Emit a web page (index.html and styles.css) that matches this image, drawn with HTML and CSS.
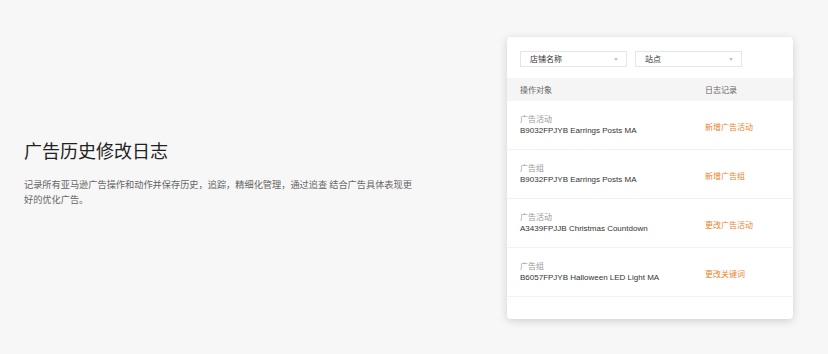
FILE: index.html
```html
<!DOCTYPE html>
<html lang="zh-CN">
<head>
    <meta charset="UTF-8">
    <meta name="viewport" content="width=device-width, initial-scale=1.0">
    <title>广告历史修改日志</title>
    <link rel="stylesheet" href="styles.css">
</head>
<body>
    <div class="section">
        <div class="intro">
            <h1>广告历史修改日志</h1>
            <p>记录所有亚马逊广告操作和动作并保存历史，追踪，精细化管理，通过追查 结合广告具体表现更好的优化广告。</p>
        </div>

        <div class="card">
            <div class="filters">
                <div class="select">店铺名称<span class="arrow"></span></div>
                <div class="select">站点<span class="arrow"></span></div>
            </div>

            <div class="table">
                <div class="row head">
                    <div class="col-obj">操作对象</div>
                    <div class="col-log">日志记录</div>
                </div>
                <div class="row">
                    <div class="col-obj">
                        <div class="type">广告活动</div>
                        <div class="name">B9032FPJYB Earrings Posts MA</div>
                    </div>
                    <div class="col-log"><a href="#">新增广告活动</a></div>
                </div>
                <div class="row">
                    <div class="col-obj">
                        <div class="type">广告组</div>
                        <div class="name">B9032FPJYB Earrings Posts MA</div>
                    </div>
                    <div class="col-log"><a href="#">新增广告组</a></div>
                </div>
                <div class="row">
                    <div class="col-obj">
                        <div class="type">广告活动</div>
                        <div class="name">A3439FPJJB Christmas Countdown</div>
                    </div>
                    <div class="col-log"><a href="#">更改广告活动</a></div>
                </div>
                <div class="row">
                    <div class="col-obj">
                        <div class="type">广告组</div>
                        <div class="name">B6057FPJYB Halloween LED Light MA</div>
                    </div>
                    <div class="col-log"><a href="#">更改关键词</a></div>
                </div>
            </div>
        </div>
    </div>
</body>
</html>
```

FILE: styles.css
```css
body {
    margin: 0;
    background-color: #f7f7f7;
    font-family: "Liberation Sans", "Noto Sans CJK SC", sans-serif;
    color: #333;
}
.section {
    display: flex;
    justify-content: space-between;
    align-items: flex-start;
    height: 354px;
    box-sizing: border-box;
    padding: 37px 35px 0 24px;
}
.intro {
    width: 395px;
    margin-top: 101px;
}
.intro h1 {
    margin: 0;
    font-family: "Noto Sans CJK SC", sans-serif;
    font-size: 18px;
    font-weight: normal;
    line-height: 24px;
    color: #222;
}
.intro p {
    margin: 15px 0 0;
    font-family: "Noto Sans CJK SC", sans-serif;
    font-size: 9.2px;
    line-height: 15px;
    color: #666;
}
.card {
    width: 286px;
    height: 282px;
    box-sizing: border-box;
    background-color: white;
    border-radius: 4px;
    box-shadow: 0 2px 8px rgba(0, 0, 0, 0.16);
    padding-top: 14px;
}
.filters {
    display: flex;
    gap: 8px;
    padding: 0 13px;
    margin-bottom: 11px;
}
.select {
    position: relative;
    width: 107px;
    height: 16px;
    box-sizing: border-box;
    border: 1px solid #e6e6e6;
    padding-left: 9px;
    font-family: "Noto Sans CJK SC", sans-serif;
    font-size: 8px;
    line-height: 14px;
    color: #333;
}
.arrow {
    position: absolute;
    right: 8px;
    top: 6px;
    border-left: 2.5px solid transparent;
    border-right: 2.5px solid transparent;
    border-top: 3px solid #c4c4c4;
}
.row {
    display: flex;
    align-items: center;
    height: 49px;
    padding: 0 13px;
    border-bottom: 1px solid #f2f2f2;
    box-sizing: border-box;
}
.row.head {
    height: 23px;
    background-color: #f5f5f5;
    border-bottom: none;
    font-family: "Noto Sans CJK SC", sans-serif;
    font-size: 8px;
    color: #666;
}
.col-obj {
    width: 185px;
}
.type {
    font-family: "Noto Sans CJK SC", sans-serif;
    font-size: 8px;
    line-height: 12px;
    color: #999;
}
.name {
    font-size: 8px;
    line-height: 12px;
    color: #333;
}
.col-log a {
    display: block;
    padding-top: 3px;
    font-family: "Noto Sans CJK SC", sans-serif;
    font-size: 8px;
    color: #e8852f;
    text-decoration: none;
}
```
